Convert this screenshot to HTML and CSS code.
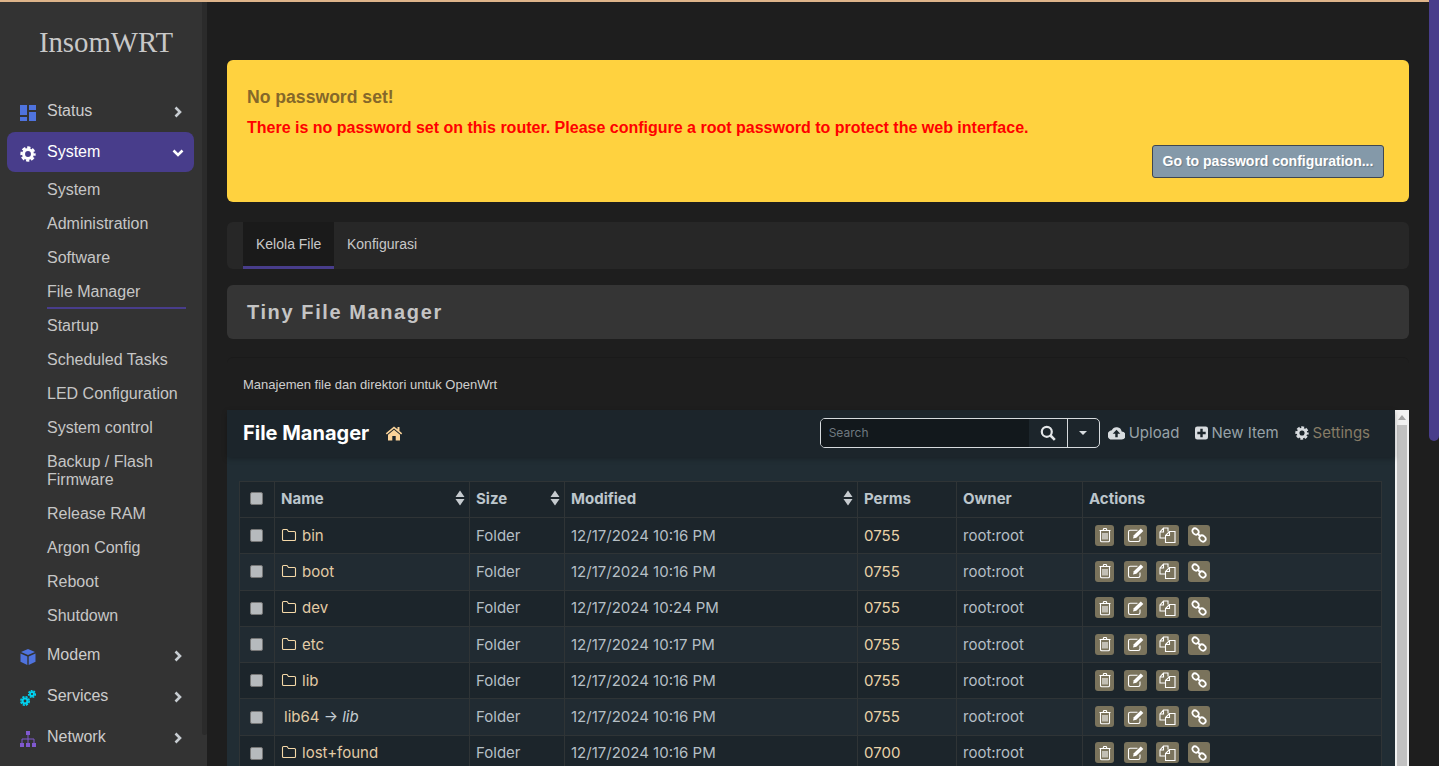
FILE: index.html
```html
<!DOCTYPE html>
<html lang="en">
<head>
<meta charset="utf-8">
<title>InsomWRT</title>
<link rel="stylesheet" href="styles.css">
</head>
<body>
<svg class="defs" width="0" height="0" aria-hidden="true">
  <symbol id="i-folder" viewBox="0 0 16 14"><path d="M1.500 3V11.500Q1.500 12.500 2.500 12.500H13.500Q14.500 12.500 14.500 11.500V4.500Q14.500 3.500 13.500 3.500H7.500L6 1.500H2.500Q1.500 1.500 1.500 2.500Z" fill="none" stroke="currentColor" stroke-width="1.100"/></symbol>
  <symbol id="i-trash" viewBox="0 0 16 16"><path d="M2.500 3.500H13.500M6 3.500 6.800 1.500H9.200L10 3.500M3.500 3.500V13.500Q3.500 14.800 4.800 14.800H11.200Q12.500 14.800 12.500 13.500V3.500M6 6V12.500M8 6V12.500M10 6V12.500" fill="none" stroke="currentColor" stroke-width="1.100"/></symbol>
  <symbol id="i-edit" viewBox="0 0 17 16"><path d="M13 9.500V12.800Q13 14.500 11.300 14.500H3.200Q1.500 14.500 1.500 12.800V5Q1.500 3.300 3.200 3.300H10.500" fill="none" stroke="currentColor" stroke-width="1.100"/><path d="M6 11.500 6.800 8.300 13.800 1.500 16.300 4 9.300 10.800Z" fill="currentColor"/></symbol>
  <symbol id="i-copy" viewBox="0 0 17 16"><path d="M6 11H1V5L4.500 1H9V4.500M4.500 1V5H1M6.500 15.500V8.500L10.500 4.500H16V15.500ZM10.500 4.500V8.500H6.500" fill="none" stroke="currentColor" stroke-width="1.100"/></symbol>
  <symbol id="i-link" viewBox="0 0 16 16"><g fill="none" stroke="currentColor" stroke-width="1.800"><ellipse cx="4.500" cy="4.500" rx="3.400" ry="2.700" transform="rotate(40 4.500 4.500)"/><ellipse cx="11.500" cy="11.500" rx="3.400" ry="2.700" transform="rotate(40 11.500 11.500)"/><path d="M6.500 6.500 9.500 9.500"/></g></symbol>
  <symbol id="i-sort" viewBox="0 0 10 16"><path d="M5 .5 9.500 7H.5ZM5 15.500.5 9H9.500Z" fill="currentColor"/></symbol>
  <symbol id="i-right" viewBox="0 0 10 12"><path d="M2.500 1.500 7 6 2.500 10.500" fill="none" stroke="currentColor" stroke-width="2.600"/></symbol>
  <symbol id="i-down" viewBox="0 0 12 10"><path d="M1.500 2.500 6 7 10.500 2.500" fill="none" stroke="currentColor" stroke-width="2.600"/></symbol>
  <symbol id="i-gear" viewBox="0 0 18 18"><circle cx="9" cy="9" r="5" fill="none" stroke="currentColor" stroke-width="3.400"/><circle cx="9" cy="9" r="7.300" fill="none" stroke="currentColor" stroke-width="2.600" stroke-dasharray="3.700 2.030" stroke-dashoffset="1.800"/></symbol>
</svg>

<div class="topline"></div>
<div class="shell">
  <aside class="sidebar">
    <div class="side-inner">
      <h1 class="logo">InsomWRT</h1>
      <nav class="menu">
        <a class="item">
          <svg class="mi ic-blue" viewBox="0 0 16 16"><path d="M0 0H7V10H0ZM9 0H16V5H9ZM9 7H16V16H9ZM0 12H7V16H0Z" fill="currentColor"/></svg>
          <span class="grow">Status</span>
          <svg class="chev" viewBox="0 0 10 12"><use href="#i-right"/></svg>
        </a>
        <a class="item active">
          <svg class="mi ic-white" viewBox="0 0 18 18"><use href="#i-gear"/></svg>
          <span class="grow">System</span>
          <svg class="chev chev-d" viewBox="0 0 12 10"><use href="#i-down"/></svg>
        </a>
        <ul class="sub">
          <li>System</li>
          <li>Administration</li>
          <li>Software</li>
          <li class="current">File Manager</li>
          <li>Startup</li>
          <li>Scheduled Tasks</li>
          <li>LED Configuration</li>
          <li>System control</li>
          <li class="two">Backup / Flash Firmware</li>
          <li>Release RAM</li>
          <li>Argon Config</li>
          <li>Reboot</li>
          <li>Shutdown</li>
        </ul>
        <a class="item">
          <svg class="mi ic-blue" viewBox="0 0 16 16"><path d="M8 0 15 3 8 6 1 3ZM.5 4.500 7.300 7.500V16L.5 12.800ZM15.500 4.500 8.700 7.500V16L15.500 12.800Z" fill="currentColor"/></svg>
          <span class="grow">Modem</span>
          <svg class="chev" viewBox="0 0 10 12"><use href="#i-right"/></svg>
        </a>
        <a class="item">
          <svg class="mi ic-cyan" viewBox="0 0 16 16"><g fill="none" stroke="currentColor"><circle cx="5" cy="11" r="2.500" stroke-width="2.200"/><circle cx="5" cy="11" r="4.200" stroke-width="1.600" stroke-dasharray="2.200 1.100"/><circle cx="12" cy="4" r="2" stroke-width="1.900"/><circle cx="12" cy="4" r="3.400" stroke-width="1.400" stroke-dasharray="1.800 1.070"/></g></svg>
          <span class="grow">Services</span>
          <svg class="chev" viewBox="0 0 10 12"><use href="#i-right"/></svg>
        </a>
        <a class="item">
          <svg class="mi ic-violet" viewBox="0 0 16 16"><path d="M6 0H10V4H6ZM0 12H4V16H0ZM6 12H10V16H6ZM12 12H16V16H12Z" fill="currentColor"/><path d="M8 4V12M2 12V8H14V12" fill="none" stroke="currentColor"/></svg>
          <span class="grow">Network</span>
          <svg class="chev" viewBox="0 0 10 12"><use href="#i-right"/></svg>
        </a>
      </nav>
    </div>
    <div class="side-scroll"><div class="side-thumb"></div></div>
  </aside>

  <main class="main">
    <section class="alert">
      <h4 class="alert-title">No password set!</h4>
      <p class="alert-text">There is no password set on this router. Please configure a root password to protect the web interface.</p>
      <div class="alert-actions"><button class="alert-btn">Go to password configuration...</button></div>
    </section>

    <div class="tabs">
      <span class="tab on">Kelola File</span>
      <span class="tab">Konfigurasi</span>
    </div>

    <h2 class="page-title">Tiny File Manager</h2>
    <div class="descr">Manajemen file dan direktori untuk OpenWrt</div>

    <div class="frame">
      <div class="fm">
        <header class="fm-nav">
          <span class="fm-brand">File Manager</span>
          <svg class="home" viewBox="0 0 18 16"><path d="M9 1.500 0.800 8.300 1.800 9.500 9 3.500 16.200 9.500 17.200 8.300 14.500 6V2H12.500V4.300ZM9 4.800 3 9.800V15.500H7.300V11H10.700V15.500H15V9.800Z" fill="currentColor"/></svg>
          <span class="grow"></span>
          <div class="search">
            <span class="search-field">Search</span>
            <span class="search-btn"><svg class="sicon" viewBox="0 0 16 16"><circle cx="6.800" cy="6.800" r="5" fill="none" stroke="currentColor" stroke-width="2.200"/><path d="M10.500 10.500 14.800 14.800" stroke="currentColor" stroke-width="2.600"/></svg></span>
            <span class="search-drop"><i class="caret"></i></span>
          </div>
          <a class="nav-link"><svg class="nicon" viewBox="0 0 18 14"><path d="M14.500 5.500A5.500 5.500 0 0 0 4 4.200 4.700 4.700 0 0 0 4.500 14H14A4.200 4.200 0 0 0 14.500 5.500ZM9 3.500 13 7.800H10.300V11.500H7.700V7.800H5Z" fill="currentColor" fill-rule="evenodd"/></svg>Upload</a>
          <a class="nav-link"><svg class="nicon sq" viewBox="0 0 14 14"><path d="M2.500 0H11.500Q14 0 14 2.500V11.500Q14 14 11.500 14H2.500Q0 14 0 11.500V2.500Q0 0 2.500 0ZM5.700 2.500V5.700H2.500V8.300H5.700V11.500H8.300V8.300H11.500V5.700H8.300V2.500Z" fill="currentColor" fill-rule="evenodd"/></svg>New Item</a>
          <a class="nav-link dim"><svg class="nicon gear" viewBox="0 0 18 18"><use href="#i-gear"/></svg>Settings</a>
        </header>

        <div class="fm-body">
          <table class="files">
            <colgroup>
              <col class="c-check"><col class="c-name"><col class="c-size"><col class="c-mod"><col class="c-perm"><col class="c-own"><col>
            </colgroup>
            <thead>
              <tr>
                <th><span class="chk"></span></th>
                <th><div class="th-sort">Name<svg class="sort"><use href="#i-sort"/></svg></div></th>
                <th><div class="th-sort">Size<svg class="sort"><use href="#i-sort"/></svg></div></th>
                <th><div class="th-sort">Modified<svg class="sort"><use href="#i-sort"/></svg></div></th>
                <th>Perms</th>
                <th>Owner</th>
                <th>Actions</th>
              </tr>
            </thead>
            <tbody>
              <tr>
                <td><span class="chk"></span></td>
                <td class="name"><svg class="folder"><use href="#i-folder"/></svg>bin</td>
                <td>Folder</td><td>12/17/2024 10:16 PM</td><td class="perm">0755</td><td>root:root</td>
                <td><div class="acts"><span class="act a1"><svg><use href="#i-trash"/></svg></span><span class="act a2"><svg><use href="#i-edit"/></svg></span><span class="act a2"><svg><use href="#i-copy"/></svg></span><span class="act a3"><svg><use href="#i-link"/></svg></span></div></td>
              </tr>
              <tr>
                <td><span class="chk"></span></td>
                <td class="name"><svg class="folder"><use href="#i-folder"/></svg>boot</td>
                <td>Folder</td><td>12/17/2024 10:16 PM</td><td class="perm">0755</td><td>root:root</td>
                <td><div class="acts"><span class="act a1"><svg><use href="#i-trash"/></svg></span><span class="act a2"><svg><use href="#i-edit"/></svg></span><span class="act a2"><svg><use href="#i-copy"/></svg></span><span class="act a3"><svg><use href="#i-link"/></svg></span></div></td>
              </tr>
              <tr>
                <td><span class="chk"></span></td>
                <td class="name"><svg class="folder"><use href="#i-folder"/></svg>dev</td>
                <td>Folder</td><td>12/17/2024 10:24 PM</td><td class="perm">0755</td><td>root:root</td>
                <td><div class="acts"><span class="act a1"><svg><use href="#i-trash"/></svg></span><span class="act a2"><svg><use href="#i-edit"/></svg></span><span class="act a2"><svg><use href="#i-copy"/></svg></span><span class="act a3"><svg><use href="#i-link"/></svg></span></div></td>
              </tr>
              <tr>
                <td><span class="chk"></span></td>
                <td class="name"><svg class="folder"><use href="#i-folder"/></svg>etc</td>
                <td>Folder</td><td>12/17/2024 10:17 PM</td><td class="perm">0755</td><td>root:root</td>
                <td><div class="acts"><span class="act a1"><svg><use href="#i-trash"/></svg></span><span class="act a2"><svg><use href="#i-edit"/></svg></span><span class="act a2"><svg><use href="#i-copy"/></svg></span><span class="act a3"><svg><use href="#i-link"/></svg></span></div></td>
              </tr>
              <tr>
                <td><span class="chk"></span></td>
                <td class="name"><svg class="folder"><use href="#i-folder"/></svg>lib</td>
                <td>Folder</td><td>12/17/2024 10:16 PM</td><td class="perm">0755</td><td>root:root</td>
                <td><div class="acts"><span class="act a1"><svg><use href="#i-trash"/></svg></span><span class="act a2"><svg><use href="#i-edit"/></svg></span><span class="act a2"><svg><use href="#i-copy"/></svg></span><span class="act a3"><svg><use href="#i-link"/></svg></span></div></td>
              </tr>
              <tr>
                <td><span class="chk"></span></td>
                <td class="name symlink">lib64<span class="target"> → <em>lib</em></span></td>
                <td>Folder</td><td>12/17/2024 10:16 PM</td><td class="perm">0755</td><td>root:root</td>
                <td><div class="acts"><span class="act a1"><svg><use href="#i-trash"/></svg></span><span class="act a2"><svg><use href="#i-edit"/></svg></span><span class="act a2"><svg><use href="#i-copy"/></svg></span><span class="act a3"><svg><use href="#i-link"/></svg></span></div></td>
              </tr>
              <tr>
                <td><span class="chk"></span></td>
                <td class="name"><svg class="folder"><use href="#i-folder"/></svg>lost+found</td>
                <td>Folder</td><td>12/17/2024 10:16 PM</td><td class="perm">0700</td><td>root:root</td>
                <td><div class="acts"><span class="act a1"><svg><use href="#i-trash"/></svg></span><span class="act a2"><svg><use href="#i-edit"/></svg></span><span class="act a2"><svg><use href="#i-copy"/></svg></span><span class="act a3"><svg><use href="#i-link"/></svg></span></div></td>
              </tr>
            </tbody>
          </table>
        </div>
      </div>
      <div class="frame-scroll">
        <div class="frame-arrow"></div>
        <div class="frame-thumb"></div>
      </div>
    </div>
  </main>

  <div class="page-scroll"><div class="page-thumb"></div></div>
</div>
</body>
</html>
```

FILE: styles.css
```css
* { box-sizing: border-box; }
html, body { margin: 0; height: 100%; overflow: hidden; }
body { background: #1e1e1e; color: #ccc; font-family: "Liberation Sans", Arial, sans-serif; font-size: 16px; }
.defs { position: absolute; }
.grow { flex: 1; }

.topline { height: 2px; background: #deb48a; }
.shell { display: flex; height: 764px; }

/* sidebar */
.sidebar { width: 207px; flex: none; display: flex; background: #333; }
.side-inner { width: 202px; flex: none; }
.side-scroll { width: 5px; }
.side-thumb { height: 733px; background: #2b2b2b; border-radius: 0 0 3px 3px; }
.logo { margin: 0; padding: 21px 0 0 10px; height: 89px; text-align: center; font: 400 28.8px/38px "Liberation Serif", serif; color: #c8c8c8; }
.item { display: flex; align-items: center; height: 40px; margin: 0 8px 1px 7px; padding: 0 11px 0 13px; border-radius: 8px; color: #ccc; line-height: 40px; }
.item.active { background: #483d8b; color: #fff; }
.mi { width: 16px; height: 16px; margin: 4px 11px 0 0; flex: none; }
.ic-blue { color: #4f73de; }
.ic-white { color: #fff; }
.ic-cyan { color: #00d2f0; }
.ic-violet { color: #8059cf; }
.chev { width: 10px; height: 12px; color: #c7ccd1; flex: none; margin-top: 2px; }
.chev-d { width: 12px; height: 10px; color: #fff; margin-right: -1px; }
.sub { list-style: none; margin: 0 0 2px; padding: 0; }
.sub li { margin: 0 16px 0 47px; padding: 8px 0; line-height: 18px; color: #c6c6c6; }
.sub li.current { border-bottom: 2px solid #483d8b; padding-bottom: 6px; }

/* main */
.main { flex: 1; min-width: 0; padding: 58px 20px 0; display: flex; flex-direction: column; overflow: hidden; }
.alert { height: 142px; flex: none; background: #ffd23f; border-radius: 6px; padding: 26px 25px 0 20px; }
.alert-title { margin: 0; font-size: 17.6px; line-height: 22px; font-weight: 700; color: #85682a; }
.alert-text { margin: 9px 0 0; font-size: 16px; line-height: 22px; font-weight: 700; color: #f00; }
.alert-actions { display: flex; justify-content: flex-end; margin-top: 6px; }
.alert-btn { width: 232px; height: 33px; padding: 0 0 2px; background: #8499a9; border: 1px solid #3e4650; border-radius: 3px; color: #fff; font: 700 14px "Liberation Sans", Arial, sans-serif; text-shadow: 1px 1px 1px rgba(0,0,0,.2); }

.tabs { height: 47px; flex: none; margin-top: 20px; padding-left: 16px; display: flex; background: #272727; border-radius: 6px; font-size: 14px; }
.tab { padding: 0 13px; line-height: 44px; color: #c8c8c8; }
.tab.on { width: 91px; flex: none; white-space: nowrap; background: #1a1a1a; border-bottom: 3px solid #483d8b; }

.page-title { height: 54px; flex: none; margin: 16px 0 0; padding-left: 20px; background: #353535; border-radius: 6px; font-size: 20px; line-height: 54px; letter-spacing: 1.6px; font-weight: 700; color: #c4c4c4; }
.descr { height: 53px; flex: none; margin-top: 18px; padding: 18px 0 0 16px; border-top: 1px solid #1a1a1a; border-radius: 6px 6px 0 0; font-size: 13px; line-height: 17px; color: #cfcfcf; }

.frame { flex: 1; display: flex; min-height: 0; font-family: Inter, "Liberation Sans", sans-serif; }
.fm { flex: 1; min-width: 0; background: #212d34; }
.frame-scroll { width: 14px; flex: none; background: #f1f1f1; padding: 0 2px; }
.frame-arrow { height: 15px; position: relative; }
.frame-arrow::after { content: ""; position: absolute; left: 1px; top: 5px; border: 4px solid transparent; border-top: 0; border-bottom: 5px solid #a3a3a3; }
.frame-thumb { height: 400px; background: #c1c1c1; }

.fm-nav { height: 47px; display: flex; align-items: center; padding: 0 25px 1px 16px; background: #1c252b; box-shadow: 0 2px 5px rgba(0,0,0,.25); font-size: 15px; color: #97a2a8; position: relative; }
.fm-brand { font-size: 20px; font-weight: 700; color: #fff; margin-top: -1px; }
.home { width: 18px; height: 16px; margin-left: 16px; color: #fbd49a; }
.search { display: flex; width: 280px; height: 30px; border: 1px solid #d6dadd; border-radius: 5px; margin-right: 8px; overflow: hidden; }
.search-field { width: 208px; padding-left: 8px; background: #12181c; color: #6f7980; font-size: 12px; line-height: 28px; }
.search-btn { width: 39px; display: flex; align-items: center; justify-content: center; background: #1c252b; color: #e3e6e8; border-right: 1px solid #d6dadd; }
.sicon { width: 16px; height: 16px; }
.search-drop { flex: 1; display: flex; align-items: center; justify-content: center; }
.caret { border: 4px solid transparent; border-top: 4px solid #d8dcdf; border-bottom: 0; }
.nav-link { display: flex; align-items: center; margin: -1px 16px 0 0; line-height: 20px; }
.nav-link.dim { color: #867c66; margin-right: 0; }
.nicon { width: 17px; height: 14px; margin-right: 4px; color: #d8dcdf; }
.nicon.sq { width: 13px; margin-right: 3px; }
.nicon.gear { width: 14px; }

.fm-body { padding: 23.7px 13px 0 12px; }
.files { width: 100%; table-layout: fixed; border-collapse: collapse; font-size: 15px; color: #b5bfc5; }
.c-check { width: 35px; }
.c-name { width: 195px; }
.c-size { width: 95px; }
.c-mod { width: 293px; }
.c-perm { width: 99px; }
.c-own { width: 126px; }
.files th, .files td { border: 1px solid #2f3436; padding: 0 6px 1px; height: 36.3px; text-align: left; white-space: nowrap; }
.files th { padding-bottom: 2px; font-weight: 700; color: #bcc6cc; background: #1c252b; }
.files tbody tr:nth-child(odd) { background: #1c252b; }
.files tbody tr:nth-child(even) { background: #212b32; }
.th-sort { display: flex; justify-content: space-between; align-items: center; }
.sort { width: 10px; height: 16px; color: #c6cbcf; margin-right: -2px; }
.chk { display: block; width: 13px; height: 13px; margin: 1px 0 0 3.500px; background: #b6babd; border: 1px solid #777; border-radius: 2px; }
.name { color: #e3cba5; }
.symlink { padding-left: 9px !important; }
.target { color: #c5cdd2; }
.folder { width: 16px; height: 14px; margin-right: 5px; vertical-align: -1px; color: #f5d9a8; }
.perm { color: #ead3a8; }
.acts { display: flex; gap: 9px; padding-left: 6px; }
.act { display: flex; align-items: center; justify-content: center; height: 21px; background: #7a735c; border-radius: 3px; color: #fff; }
.act svg { width: 16px; height: 16px; }
.a1 { width: 19px; margin-right: 1px; }
.a2 { width: 23px; }
.a2 svg { width: 17px; }
.a3 { width: 22px; }

.page-scroll { width: 10px; flex: none; background: #1e1e1e; margin-top: -2px; }
.page-thumb { height: 441px; background: #483d8b; border-radius: 0 0 5px 5px; }
```
